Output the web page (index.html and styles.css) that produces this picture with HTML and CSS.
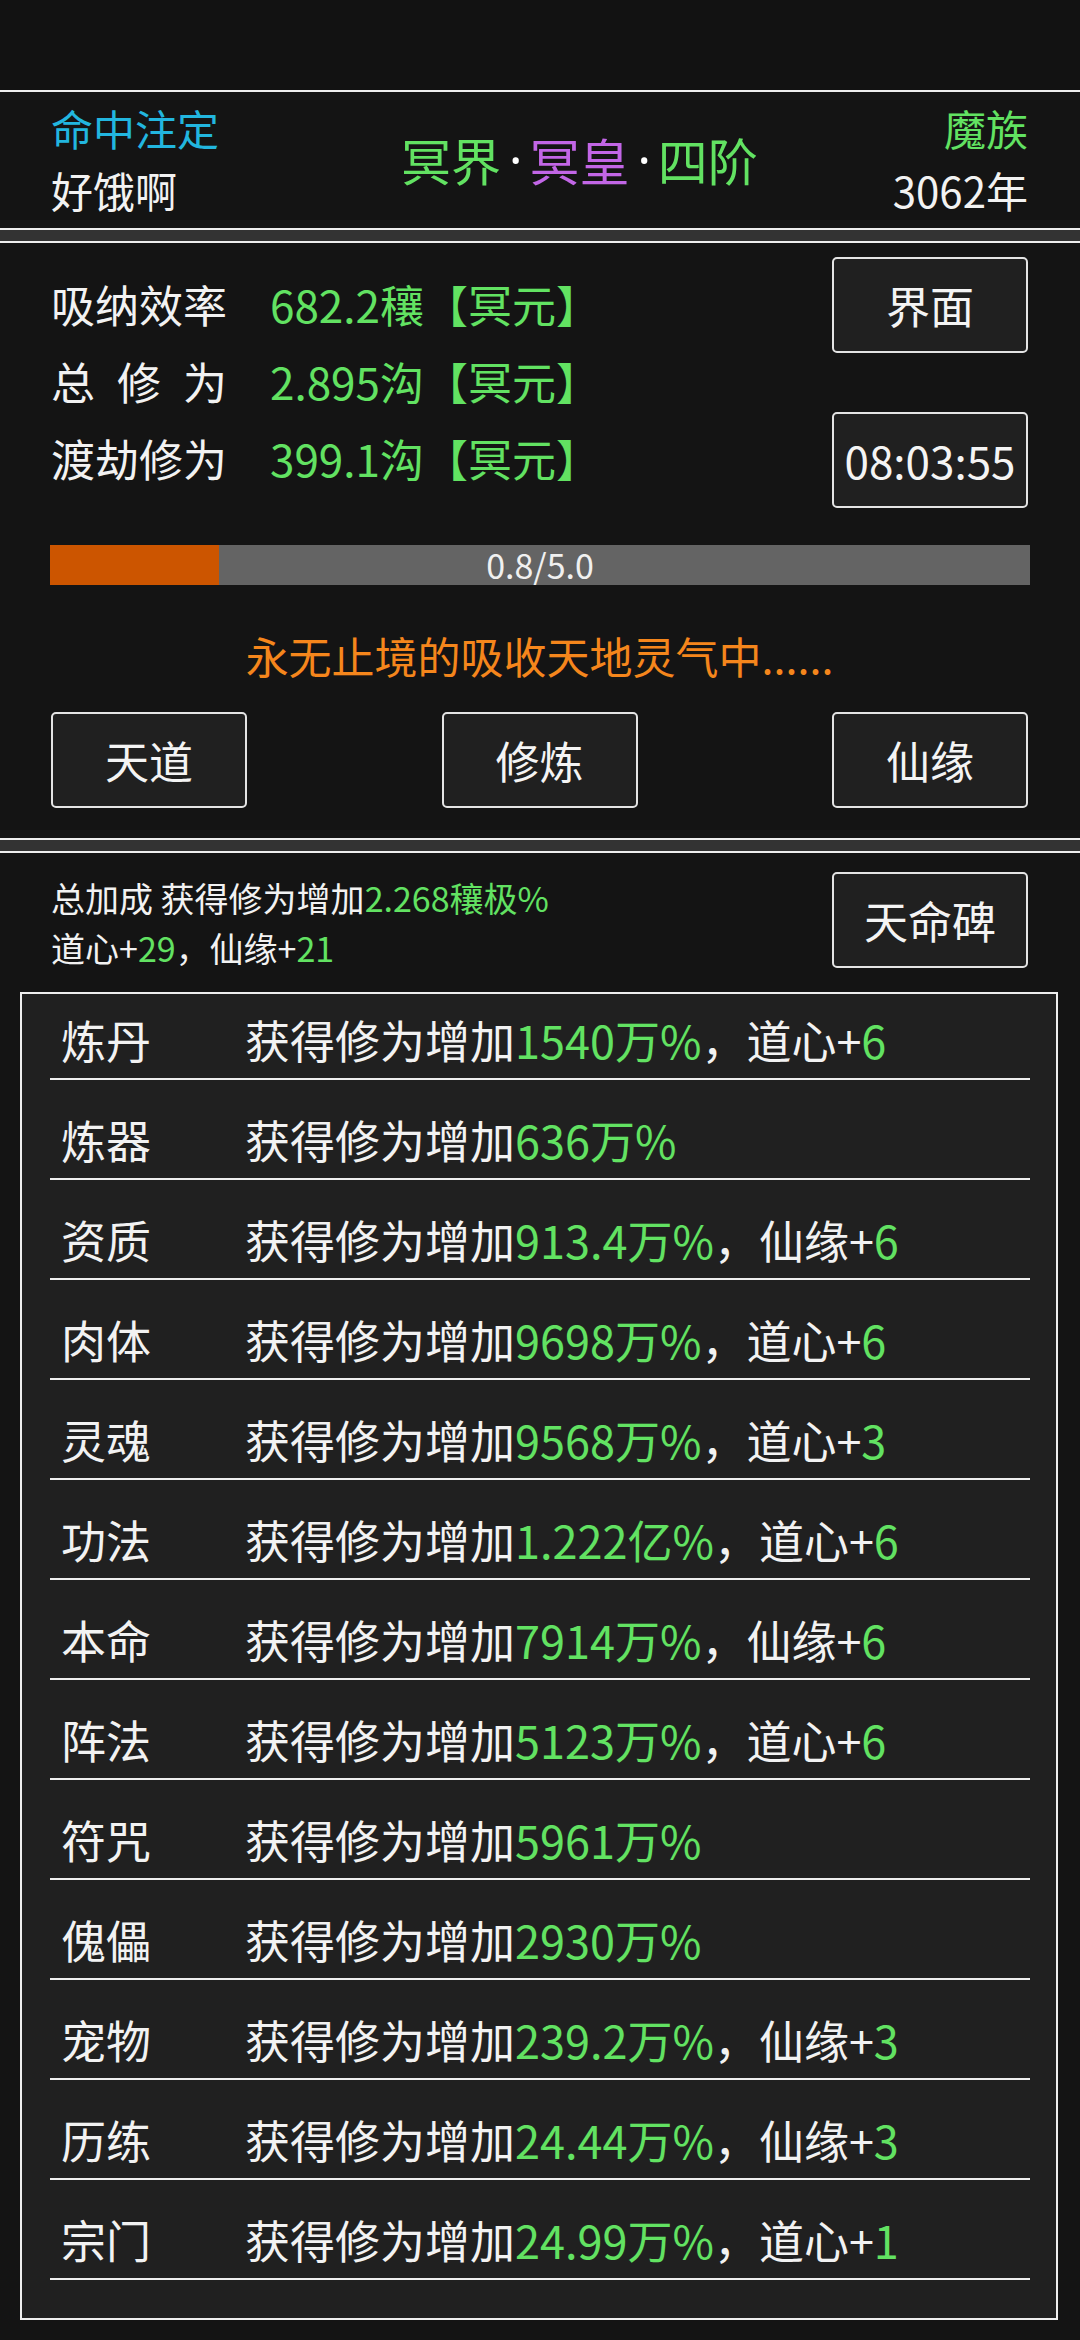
FILE: index.html
```html
<!DOCTYPE html>
<html lang="zh-CN">
<head>
<meta charset="utf-8">
<link rel="stylesheet" href="styles.css">
</head>
<body>
<div class="statusbar"></div>
<header class="panel top">
  <div class="col left">
    <div class="fate">命中注定</div>
    <div class="name">好饿啊</div>
  </div>
  <div class="title"><span class="g">冥界</span><span class="dot">·</span><span class="p">冥皇</span><span class="dot">·</span><span class="g">四阶</span></div>
  <div class="col right">
    <div class="race">魔族</div>
    <div class="year">3062年</div>
  </div>
</header>
<div class="gap"></div>
<section class="panel main">
  <div class="statsrow">
    <div class="stats">
      <div class="stat"><span class="label">吸纳效率</span><span class="val">682.2穰【冥元】</span></div>
      <div class="stat"><span class="label">总 修 为</span><span class="val">2.895沟【冥元】</span></div>
      <div class="stat"><span class="label">渡劫修为</span><span class="val">399.1沟【冥元】</span></div>
    </div>
    <div class="sidebtns">
      <div class="btn">界面</div>
      <div class="btn">08:03:55</div>
    </div>
  </div>
  <div class="progress"><div class="fill" style="width:17.2%"></div><span class="ptext">0.8/5.0</span></div>
  <div class="status">永无止境的吸收天地灵气中......</div>
  <div class="btnrow">
    <div class="btn">天道</div>
    <div class="btn">修炼</div>
    <div class="btn">仙缘</div>
  </div>
</section>
<div class="gap"></div>
<section class="panel bonus">
  <div class="bonushead">
    <div class="summary">
      <div>总加成 获得修为增加<span class="g">2.268穰极%</span></div>
      <div>道心+<span class="g">29</span>，仙缘+<span class="g">21</span></div>
    </div>
    <div class="btn">天命碑</div>
  </div>
  <div class="list">
    <div class="row"><span class="rl">炼丹</span><span>获得修为增加<span class="g">1540万%</span>，道心+<span class="g">6</span></span></div>
    <div class="row"><span class="rl">炼器</span><span>获得修为增加<span class="g">636万%</span></span></div>
    <div class="row"><span class="rl">资质</span><span>获得修为增加<span class="g">913.4万%</span>，仙缘+<span class="g">6</span></span></div>
    <div class="row"><span class="rl">肉体</span><span>获得修为增加<span class="g">9698万%</span>，道心+<span class="g">6</span></span></div>
    <div class="row"><span class="rl">灵魂</span><span>获得修为增加<span class="g">9568万%</span>，道心+<span class="g">3</span></span></div>
    <div class="row"><span class="rl">功法</span><span>获得修为增加<span class="g">1.222亿%</span>，道心+<span class="g">6</span></span></div>
    <div class="row"><span class="rl">本命</span><span>获得修为增加<span class="g">7914万%</span>，仙缘+<span class="g">6</span></span></div>
    <div class="row"><span class="rl">阵法</span><span>获得修为增加<span class="g">5123万%</span>，道心+<span class="g">6</span></span></div>
    <div class="row"><span class="rl">符咒</span><span>获得修为增加<span class="g">5961万%</span></span></div>
    <div class="row"><span class="rl">傀儡</span><span>获得修为增加<span class="g">2930万%</span></span></div>
    <div class="row"><span class="rl">宠物</span><span>获得修为增加<span class="g">239.2万%</span>，仙缘+<span class="g">3</span></span></div>
    <div class="row"><span class="rl">历练</span><span>获得修为增加<span class="g">24.44万%</span>，仙缘+<span class="g">3</span></span></div>
    <div class="row"><span class="rl">宗门</span><span>获得修为增加<span class="g">24.99万%</span>，道心+<span class="g">1</span></span></div>
  </div>
</section>
</body>
</html>
```

FILE: styles.css
```css
* { box-sizing: border-box; }
html, body { margin: 0; padding: 0; }
body {
  width: 1080px;
  height: 2340px;
  overflow: hidden;
  background: #121212;
  color: #f2f2f2;
  font-family: "Noto Sans CJK SC", "Noto Sans", sans-serif;
}
.g { color: #62e262; }
.p { color: #c266e6; }

.statusbar { height: 90px; background: #121212; }
.gap { height: 11px; background: #333333; }

.panel {
  background: #141414;
  border-top: 2px solid #eeeeee;
  border-bottom: 2px solid #eeeeee;
}

/* header */
.top {
  display: flex;
  align-items: center;
  padding: 5px 52px 7px 51px;
}
.col { font-size: 42px; line-height: 62px; }
.col.right { text-align: right; margin-left: auto; }
.fate { color: #22b6df; }
.race { color: #62e262; }
.title {
  font-size: 50px;
  line-height: 62px;
  margin-left: 182px;
  display: flex;
  align-items: center;
}
.title .dot {
  font-family: "Noto Sans", "DejaVu Sans", sans-serif;
  font-size: 50px;
  color: #ffffff;
  margin: 0 7px 0 8px;
}

/* main panel */
.main { padding: 14px 52px 30px 51px; }
.statsrow {
  display: flex;
  justify-content: space-between;
  align-items: flex-start;
}
.stats { margin-top: 9px; font-size: 44px; line-height: 77px; }
.stat { display: flex; }
.label {
  display: inline-block;
  width: 176px;
  text-align: justify;
  text-align-last: justify;
  margin-right: 43px;
}
.val { color: #62e262; }
.sidebtns { display: flex; flex-direction: column; gap: 59px; }

.btn {
  width: 196px;
  height: 96px;
  border: 2px solid #e4e4e4;
  border-radius: 5px;
  background: #202020;
  display: flex;
  align-items: center;
  justify-content: center;
  font-size: 44px;
  color: #f4f4f4;
}

.progress {
  display: grid;
  margin: 37px -2px 0 -1px;
  height: 40px;
  background: #646464;
}
.progress .fill {
  grid-area: 1 / 1;
  justify-self: start;
  height: 40px;
  background: #cc5500;
}
.progress .ptext {
  grid-area: 1 / 1;
  justify-self: center;
  align-self: center;
  font-size: 34px;
  line-height: 40px;
  color: #f0f0f0;
}
.status {
  margin-top: 40px;
  text-align: center;
  font-size: 43px;
  line-height: 60px;
  color: #f5861c;
}
.btnrow {
  margin-top: 27px;
  display: flex;
  justify-content: space-between;
}

/* bonus panel */
.bonus {
  padding: 19px 22px 20px 20px;
  border-bottom: none;
}
.bonushead {
  display: flex;
  justify-content: space-between;
  align-items: flex-start;
  padding: 0 30px 0 31px;
}
.summary { margin-top: 1px; font-size: 34px; line-height: 50px; }
.list {
  margin-top: 19px;
  background: #202020;
  border: 2px solid #eeeeee;
  padding: 0 26px 38px 28px;
}
.row {
  display: flex;
  font-size: 45px;
  line-height: 60px;
  margin-top: 30px;
  padding: 0 0 8px 11px;
  border-bottom: 2px solid #eeeeee;
}
.row:first-child { margin-top: 16px; }
.rl { width: 184px; flex: none; }
```
